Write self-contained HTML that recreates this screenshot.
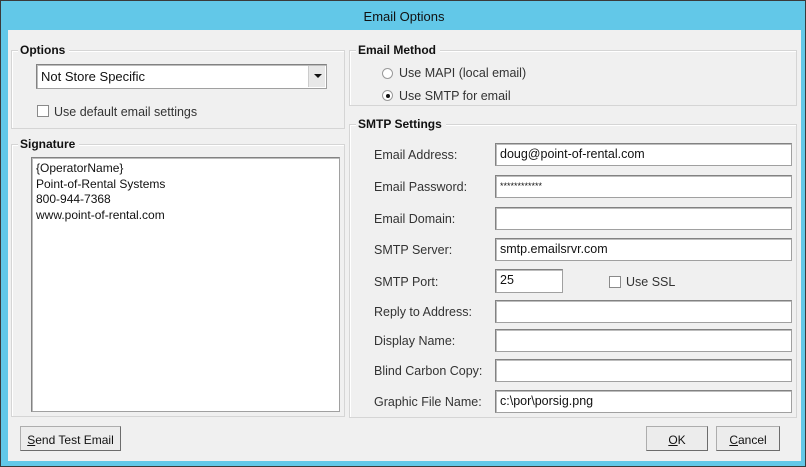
<!DOCTYPE html>
<html><head><meta charset="utf-8"><style>
*{box-sizing:border-box;margin:0;padding:0}
body{width:806px;height:467px;background:#62c8e8;font-family:"Liberation Sans",sans-serif;font-size:12px;color:#222;position:relative;overflow:hidden;border:1px solid #3a3a3a}
.abs{position:absolute}
.title{left:0;top:8px;width:806px;text-align:center;font-size:13px;color:#111}
.client{left:7px;top:29px;width:793px;height:431px;background:#f0f0f0}
.grp{position:absolute;border:1px solid #d5d5d5;box-shadow:inset 1px 1px 0 #fff}
.gl{position:absolute;font-weight:bold;background:#f0f0f0;padding:0 4px 0 2px;font-size:12px;color:#111}
.tb{position:absolute;background:#fff;border:1px solid #a0a0a0;border-top-color:#828282;border-left-color:#828282;box-shadow:inset 1px 1px 0 #bdbdbd;padding:3px 0 0 4px;font-size:12.5px;color:#111;white-space:nowrap}
.lbl{position:absolute;font-size:12.5px;color:#333}
.cb{position:absolute;width:12px;height:12px;border:1px solid #8a8a8a;background:#fff}
.rd{position:absolute;width:11px;height:11px;border:1px solid #999;border-radius:50%;background:#fff}
.btn{position:absolute;border:1px solid #adadad;border-right-color:#6c6c6c;border-bottom-color:#6c6c6c;background:#ececec;text-align:center;font-size:12px;padding-top:6px;color:#111}
</style></head><body>
<div class="abs title">Email Options</div>
<div class="abs client"></div>

<div class="grp" style="left:10px;top:49px;width:334px;height:79px"></div>
<div class="gl" style="left:17px;top:42px">Options</div>
<div class="tb" style="left:35px;top:63px;width:291px;height:25px;font-size:13px;padding-top:4px">Not Store Specific</div>
<div class="abs" style="left:307px;top:65px;width:17px;height:21px;background:#e8e8e8;border-left:1px solid #ccc"><div style="position:absolute;left:5px;top:8px;border-left:4px solid transparent;border-right:4px solid transparent;border-top:4px solid #111"></div></div>
<div class="cb" style="left:36px;top:104px"></div>
<div class="lbl" style="left:53px;top:104px">Use default email settings</div>

<div class="grp" style="left:10px;top:143px;width:334px;height:273px"></div>
<div class="gl" style="left:17px;top:136px">Signature</div>
<div class="tb" style="left:30px;top:156px;width:309px;height:255px;padding:3px 0 0 4px;line-height:15.5px;font-size:12px">{OperatorName}<br>Point-of-Rental Systems<br>800-944-7368<br>www.point-of-rental.com</div>

<div class="grp" style="left:348px;top:49px;width:448px;height:56px"></div>
<div class="gl" style="left:355px;top:42px">Email Method</div>
<div class="rd" style="left:381px;top:67px"></div>
<div class="lbl" style="left:398px;top:65px">Use MAPI (local email)</div>
<div class="rd" style="left:381px;top:89px"><div style="position:absolute;left:3px;top:3px;width:4px;height:4px;border-radius:50%;background:#111"></div></div>
<div class="lbl" style="left:398px;top:88px">Use SMTP for email</div>

<div class="grp" style="left:348px;top:123px;width:448px;height:294px"></div>
<div class="gl" style="left:355px;top:116px">SMTP Settings</div>

<div class="lbl" style="left:373px;top:147px">Email Address:</div>
<div class="tb" style="left:494px;top:142px;width:297px;height:23px">doug@point-of-rental.com</div>
<div class="lbl" style="left:373px;top:179px">Email Password:</div>
<div class="tb" style="left:494px;top:174px;width:297px;height:23px;font-size:9px;padding-top:5px">************</div>
<div class="lbl" style="left:373px;top:211px">Email Domain:</div>
<div class="tb" style="left:494px;top:206px;width:297px;height:23px"></div>
<div class="lbl" style="left:373px;top:242px">SMTP Server:</div>
<div class="tb" style="left:494px;top:237px;width:297px;height:23px">smtp.emailsrvr.com</div>
<div class="lbl" style="left:373px;top:274px">SMTP Port:</div>
<div class="tb" style="left:494px;top:268px;width:68px;height:24px">25</div>
<div class="cb" style="left:608px;top:275px"></div>
<div class="lbl" style="left:625px;top:274px">Use SSL</div>
<div class="lbl" style="left:373px;top:304px">Reply to Address:</div>
<div class="tb" style="left:494px;top:299px;width:297px;height:23px"></div>
<div class="lbl" style="left:373px;top:333px">Display Name:</div>
<div class="tb" style="left:494px;top:328px;width:297px;height:23px"></div>
<div class="lbl" style="left:373px;top:363px">Blind Carbon Copy:</div>
<div class="tb" style="left:494px;top:358px;width:297px;height:23px"></div>
<div class="lbl" style="left:373px;top:394px">Graphic File Name:</div>
<div class="tb" style="left:494px;top:389px;width:297px;height:23px">c:\por\porsig.png</div>

<div class="btn" style="left:19px;top:425px;width:101px;height:25px"><u>S</u>end Test Email</div>
<div class="btn" style="left:645px;top:425px;width:62px;height:25px"><u>O</u>K</div>
<div class="btn" style="left:715px;top:425px;width:64px;height:25px"><u>C</u>ancel</div>
</body></html>
